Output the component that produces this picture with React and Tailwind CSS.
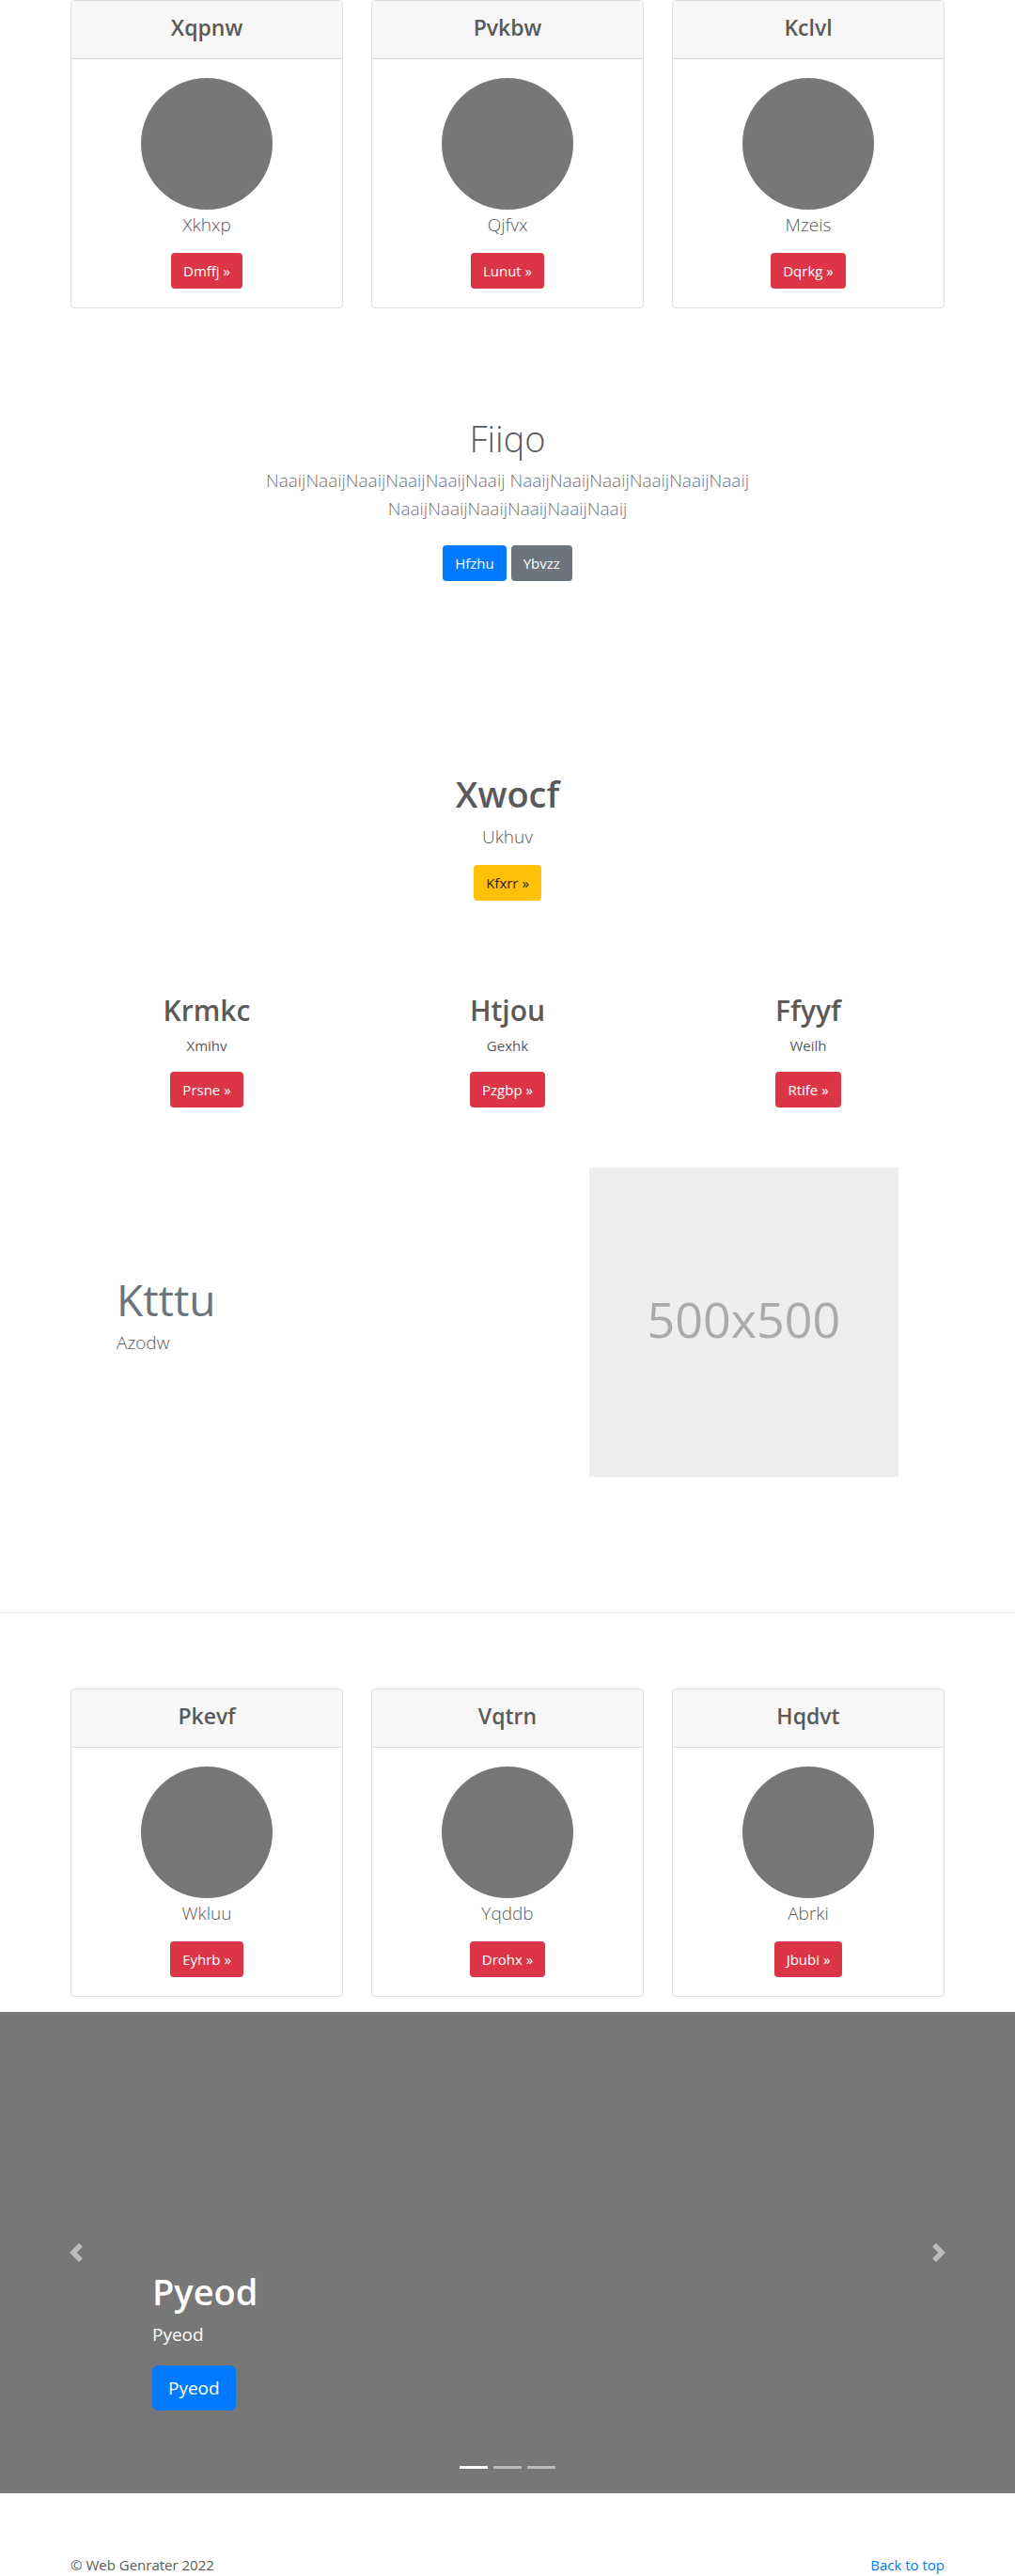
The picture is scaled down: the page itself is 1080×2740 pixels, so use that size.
const topCards = [
  { title: "Xqpnw", text: "Xkhxp", action: "Dmffj »" },
  { title: "Pvkbw", text: "Qjfvx", action: "Lunut »" },
  { title: "Kclvl", text: "Mzeis", action: "Dqrkg »" },
];

const bottomCards = [
  { title: "Pkevf", text: "Wkluu", action: "Eyhrb »" },
  { title: "Vqtrn", text: "Yqddb", action: "Drohx »" },
  { title: "Hqdvt", text: "Abrki", action: "Jbubi »" },
];

const columns = [
  { title: "Krmkc", text: "Xmihv", action: "Prsne »" },
  { title: "Htjou", text: "Gexhk", action: "Pzgbp »" },
  { title: "Ffyyf", text: "Weilh", action: "Rtife »" },
];

const tones = {
  danger: "bg-[#dc3545] text-white",
  primary: "bg-[#007bff] text-white",
  secondary: "bg-[#6c757d] text-white",
  warning: "bg-[#ffc107] text-[#212529]",
};

function Button({ tone, children }) {
  return (
    <button
      type="button"
      className={`h-[38px] cursor-pointer rounded px-[13px] text-[15px] leading-6 ${tones[tone]}`}
    >
      {children}
    </button>
  );
}

function Container({ className = "", children }) {
  return <div className={`mx-auto w-full max-w-[960px] px-[15px] ${className}`}>{children}</div>;
}

function CardRow({ cards }) {
  return (
    <Container className="grid grid-cols-3 gap-[30px]">
      {cards.map((card) => (
        <article
          key={card.title}
          className="overflow-hidden rounded border border-[#dfdfdf] bg-white text-center"
        >
          <header className="border-b border-[#d8d8d8] bg-[#f7f7f7] px-5 pt-3 pb-[17px]">
            <h4 className="text-[23px] leading-8 font-semibold">{card.title}</h4>
          </header>
          <div className="flex flex-col items-center p-5">
            <div className="size-[140px] rounded-full bg-[#777]" />
            <p className="mb-3.5 text-[19px] leading-8 font-light">{card.text}</p>
            <Button tone="danger">{card.action}</Button>
          </div>
        </article>
      ))}
    </Container>
  );
}

function Chevron({ d }) {
  return (
    <svg viewBox="0 0 8 8" className="size-5" fill="#fff" aria-hidden="true">
      <path d={d} />
    </svg>
  );
}

function Carousel() {
  return (
    <section className="relative mt-4 h-[512px] bg-[#777]">
      <div className="absolute inset-x-[15%] bottom-[88px] text-white">
        <h1 className="mb-1 text-[38px] leading-[52px] font-semibold">Pyeod</h1>
        <p className="mb-[17px] text-[19px] leading-8">Pyeod</p>
        <button
          type="button"
          className="block h-12 cursor-pointer rounded-md bg-[#007bff] px-[17px] text-[19px] leading-8"
        >
          Pyeod
        </button>
      </div>
      <button
        type="button"
        aria-label="Previous"
        className="absolute inset-y-0 left-0 flex w-[15%] cursor-pointer items-center justify-center opacity-50"
      >
        <Chevron d="M5.25 0l-4 4 4 4 1.5-1.5L4.25 4l2.5-2.5L5.25 0z" />
      </button>
      <button
        type="button"
        aria-label="Next"
        className="absolute inset-y-0 right-0 flex w-[15%] cursor-pointer items-center justify-center opacity-50"
      >
        <Chevron d="M2.75 0l-1.5 1.5L3.75 4l-2.5 2.5L2.75 8l4-4-4-4z" />
      </button>
      <div className="absolute inset-x-[15%] bottom-[26px] flex justify-center gap-[6px]">
        <button type="button" aria-label="Slide 1" className="h-[3px] w-[30px] cursor-pointer bg-white" />
        <button type="button" aria-label="Slide 2" className="h-[3px] w-[30px] cursor-pointer bg-white/50" />
        <button type="button" aria-label="Slide 3" className="h-[3px] w-[30px] cursor-pointer bg-white/50" />
      </div>
    </section>
  );
}

export default function App() {
  return (
    <div className="bg-white font-['Open_Sans','Noto_Sans',sans-serif] text-[15px] leading-6 text-[#5a5a5a]">
      <main>
        <CardRow cards={topCards} />

        <section className="mx-auto mt-28 max-w-[610px] text-center">
          <h1 className="mb-1 text-[38px] leading-[52px] font-light">Fiiqo</h1>
          <p className="mb-6 text-[19px] leading-[30px] font-light text-[#6c757d]">
            NaaijNaaijNaaijNaaijNaaijNaaij NaaijNaaijNaaijNaaijNaaijNaaij
            NaaijNaaijNaaijNaaijNaaijNaaij
          </p>
          <div className="flex justify-center gap-[5px]">
            <Button tone="primary">Hfzhu</Button>
            <Button tone="secondary">Ybvzz</Button>
          </div>
        </section>

        <section className="mt-[200px] flex flex-col items-center text-center">
          <h1 className="mb-1 text-[38px] leading-[52px] font-semibold">Xwocf</h1>
          <p className="mb-3.5 text-[19px] leading-8 font-light">Ukhuv</p>
          <Button tone="warning">Kfxrr »</Button>
        </section>

        <Container className="mt-24 grid grid-cols-3 gap-[30px]">
          {columns.map((column) => (
            <section key={column.title} className="flex flex-col items-center text-center">
              <h2 className="mb-1 text-[30px] leading-[42px] font-semibold">{column.title}</h2>
              <p className="mb-4">{column.text}</p>
              <Button tone="danger">{column.action}</Button>
            </section>
          ))}
        </Container>

        <section className="mx-auto mt-16 grid max-w-[832px] grid-cols-12 items-center gap-[30px]">
          <div className="col-span-7">
            <h2 className="mb-1 text-[46px] leading-[54px] text-[#6c757d]">Ktttu</h2>
            <p className="mb-4 text-[19px] leading-[30px] font-light">Azodw</p>
          </div>
          <div className="col-span-5 flex aspect-square items-center justify-center bg-[#eee] pb-2 text-[52px] text-[#aaa]">
            500x500
          </div>
        </section>

        <hr className="mt-36 mb-20 border-t border-[#e5e5e5]" />

        <CardRow cards={bottomCards} />
        <Carousel />
      </main>

      <footer className="mt-16">
        <Container className="flex justify-between">
          <p>© Web Genrater 2022</p>
          <a href="#" className="text-[#007bff]">
            Back to top
          </a>
        </Container>
      </footer>
    </div>
  );
}
